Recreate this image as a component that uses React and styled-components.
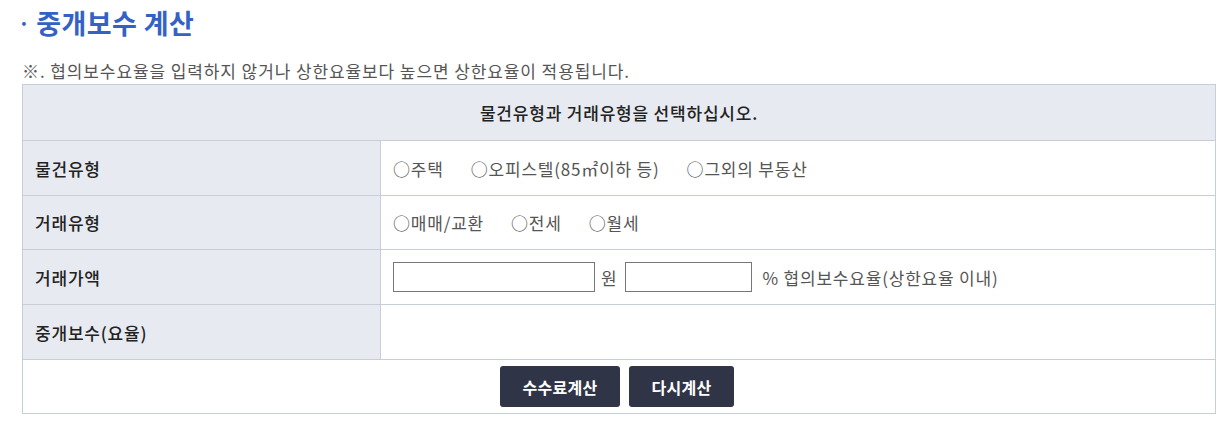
import React from "react";
import styled, { createGlobalStyle } from "styled-components";

const Global = createGlobalStyle`
  body {
    margin: 0;
    background: #fff;
    font-family: "Noto Sans CJK KR", "Noto Sans", sans-serif;
  }
`;

const Wrap = styled.div`
  padding: 0 6px 0 22px;
`;

const Title = styled.h2`
  margin: 0;
  height: 44px;
  display: flex;
  align-items: center;
  font-size: 27px;
  font-weight: 700;
  color: #3462c4;
  letter-spacing: 0.4px;
  &::before {
    content: "·";
    margin: 0 6px 0 -4px;
    font-size: 20px;
  }
`;

const Note = styled.p`
  margin: 14px 0 0;
  height: 26px;
  line-height: 26px;
  font-size: 17px;
  color: #555;
  letter-spacing: 0.9px;
`;

const Table = styled.table`
  width: 100%;
  border-collapse: collapse;
  font-size: 17px;
  letter-spacing: 0.8px;
`;

const HeadCell = styled.th`
  height: 55px;
  padding: 0;
  background: #e7eaf0;
  border: 1px solid #c8ced8;
  font-weight: 500;
  color: #222;
  text-align: center;
`;

const Label = styled.td`
  width: 345px;
  height: ${(p) => p.h || 54}px;
  padding: 0 0 0 12px;
  background: #e7eaf0;
  border: 1px solid #c8ced8;
  color: #222;
  font-weight: 500;
`;

const Value = styled.td`
  padding: 0 0 0 12px;
  border: 1px solid #c8ced8;
  color: #555;
`;

const Options = styled.div`
  display: flex;
  gap: ${(p) => p.gap}px;
`;

const Option = styled.span`
  &::before {
    content: "○";
  }
`;

const Inline = styled.div`
  display: flex;
  align-items: center;
`;

const Input = styled.input`
  box-sizing: border-box;
  width: ${(p) => p.w}px;
  height: 30px;
  border: 1px solid #777;
  margin: 0;
  padding: 0 4px;
`;

const Unit = styled.span`
  margin: 0 ${(p) => p.mr || 0}px 0 ${(p) => p.ml}px;
`;

const ButtonCell = styled.td`
  height: 53px;
  border: 1px solid #c8ced8;
  text-align: center;
  padding: 0;
`;

const Buttons = styled.div`
  display: flex;
  justify-content: center;
  gap: 9px;
  padding-right: 4px;
`;

const Button = styled.button`
  height: 41px;
  width: ${(p) => p.w}px;
  padding: 0;
  background: #2f3547;
  color: #fff;
  border: 0;
  border-radius: 3px;
  font-family: inherit;
  font-size: 16px;
  font-weight: 700;
  letter-spacing: 0.3px;
`;

export default function App() {
  return (
    <>
      <Global />
      <Wrap>
        <Title>중개보수 계산</Title>
        <Note>※. 협의보수요율을 입력하지 않거나 상한요율보다 높으면 상한요율이 적용됩니다.</Note>
        <Table>
          <tbody>
            <tr>
              <HeadCell colSpan={2}>물건유형과 거래유형을 선택하십시오.</HeadCell>
            </tr>
            <tr>
              <Label>물건유형</Label>
              <Value>
                <Options gap={27}>
                  <Option>주택</Option>
                  <Option>오피스텔(85㎡이하 등)</Option>
                  <Option>그외의 부동산</Option>
                </Options>
              </Value>
            </tr>
            <tr>
              <Label h={53}>거래유형</Label>
              <Value>
                <Options gap={27}>
                  <Option>매매/교환</Option>
                  <Option>전세</Option>
                  <Option>월세</Option>
                </Options>
              </Value>
            </tr>
            <tr>
              <Label>거래가액</Label>
              <Value>
                <Inline>
                  <Input w={202} />
                  <Unit ml={6} mr={8}>원</Unit>
                  <Input w={127} />
                  <Unit ml={10}>% 협의보수요율(상한요율 이내)</Unit>
                </Inline>
              </Value>
            </tr>
            <tr>
              <Label>중개보수(요율)</Label>
              <Value />
            </tr>
            <tr>
              <ButtonCell colSpan={2}>
                <Buttons>
                  <Button w={120}>수수료계산</Button>
                  <Button w={105}>다시계산</Button>
                </Buttons>
              </ButtonCell>
            </tr>
          </tbody>
        </Table>
      </Wrap>
    </>
  );
}
